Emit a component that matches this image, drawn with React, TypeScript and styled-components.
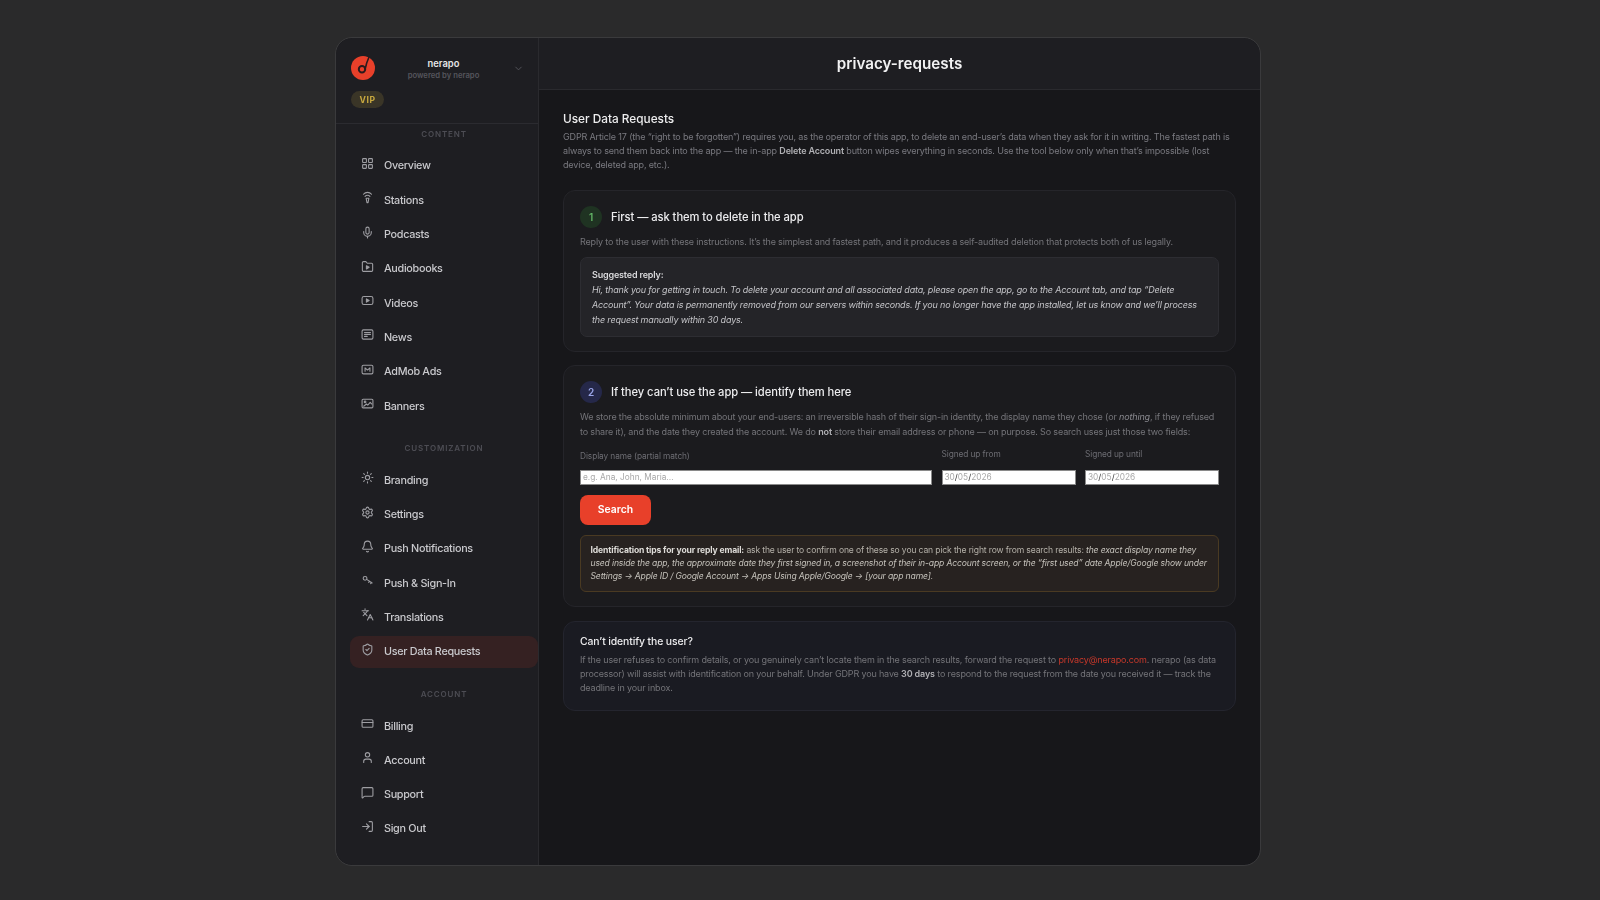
import React from "react";
import styled, { createGlobalStyle } from "styled-components";
import { LayoutGrid, Mic, Sun, Settings, Bell, Languages, ShieldCheck, CreditCard, User, MessageSquare, LogIn, ChevronDown } from "lucide-react";

const Global = createGlobalStyle`
  html, body { margin: 0; padding: 0; background: #2a2a2b; }
  * { box-sizing: border-box; }
  body { font-family: Inter, "Liberation Sans", sans-serif; }
`;

const Page = styled.div`
  width: 1600px;
  height: 900px;
  padding: 38px 0 0 336px;
  background: #2a2a2b;
  overflow: hidden;
`;
const Win = styled.div`
  width: 924px;
  height: 827px;
  display: flex;
  border-radius: 16px;
  outline: 1px solid #3a3a3c;
  overflow: hidden;
  background: #17171a;
  filter: blur(0.3px);
`;
const Side = styled.aside`
  width: 203px;
  flex: none;
  background: #1e1e22;
  border-right: 1px solid #2a2a2e;
  display: flex;
  flex-direction: column;
`;
const Brand = styled.div`
  height: 86px;
  padding: 18px 0 0 15px;
  border-bottom: 1px solid #2b2b30;
`;
const BrandRow = styled.div`
  display: flex;
  align-items: center;
  height: 24px;
`;
const BrandText = styled.div`
  width: 135px;
  margin-left: 1px;
  text-align: center;
  line-height: 1;
  padding-top: 3px;
`;
const BrandName = styled.div`
  font-size: 9.4px;
  font-weight: 600;
  color: #e6e6e8;
  margin-bottom: 3.5px;
`;
const BrandSub = styled.div`
  font-size: 7.7px;
  font-weight: 600;
  color: #55555c;
`;
const Chevron = styled.span`
  display: flex;
  margin-left: 2px;
  color: #55555c;
`;
const Vip = styled.span`
  display: inline-flex;
  align-items: center;
  justify-content: center;
  width: 33px;
  height: 17px;
  margin-top: 11px;
  border-radius: 9px;
  background: #3a3527;
  color: #c9a93f;
  font-size: 8.6px;
  font-weight: 700;
  letter-spacing: 0.5px;
`;
const Nav = styled.nav`
  padding: 4px 0 0 14px;
`;
const Section = styled.div<{ $first?: boolean }>`
  height: 12px;
  line-height: 12px;
  margin: ${(p) => (p.$first ? "-0.5px 0 10.3px" : "19.6px 0 10.4px")};
  text-align: center;
  font-size: 8px;
  font-weight: 600;
  letter-spacing: 0.85px;
  color: #4d4d54;
`;
const List = styled.div`
  display: flex;
  flex-direction: column;
  gap: 2px;
`;
const Item = styled.a<{ $active?: boolean }>`
  display: flex;
  align-items: center;
  gap: 10px;
  height: 32.3px;
  padding-left: 11px;
  border-radius: 9px;
  font-size: 10.8px;
  letter-spacing: -0.3px;
  font-weight: 500;
  color: #c9c9cd;
  background: ${(p) => (p.$active ? "#352122" : "transparent")};
  svg { flex: none; margin-bottom: 5px; color: #9e9ea3; }
`;

const Main = styled.main`
  flex: 1;
  display: flex;
  flex-direction: column;
  min-width: 0;
`;
const Top = styled.header`
  height: 51.5px;
  flex: none;
  display: flex;
  align-items: center;
  justify-content: center;
  background: #1e1e22;
  border-bottom: 1px solid #2a2a2e;
  font-size: 15.2px;
  font-weight: 600;
  color: #f2f2f3;
`;
const Content = styled.div`
  padding: 21px 24px 0;
`;
const H2 = styled.h2`
  margin: 0 0 3.5px;
  font-size: 11.8px;
  line-height: 16px;
  font-weight: 500;
  color: #ededee;
`;
const Intro = styled.p`
  margin: 0 0 17px;
  font-size: 9px;
  letter-spacing: -0.15px;
  line-height: 14.2px;
  color: #7a7a80;
  b { color: #b0b0b4; font-weight: 600; }
`;
const Card = styled.section<{ $tint?: boolean }>`
  padding: ${(p) => (p.$tint ? "12.5px 16px 14.5px" : "15px 16px 14.5px")};
  margin-bottom: 13.3px;
  border-radius: 12px;
  border: 1px solid ${(p) => (p.$tint ? "#24252e" : "#25252a")};
  background: ${(p) => (p.$tint ? "#1a1b22" : "#1b1b1e")};
`;
const StepHead = styled.div`
  display: flex;
  align-items: center;
  gap: 9px;
  height: 22px;
  margin-bottom: 7.2px;
`;
const Badge = styled.span<{ $bg: string; $fg: string }>`
  width: 22px;
  height: 22px;
  border-radius: 50%;
  display: flex;
  align-items: center;
  justify-content: center;
  background: ${(p) => p.$bg};
  color: ${(p) => p.$fg};
  font-size: 10px;
  font-weight: 600;
`;
const StepTitle = styled.h3`
  margin: 0;
  font-size: 11.2px;
  letter-spacing: -0.06px;
  font-weight: 500;
  color: #ececee;
`;
const Para = styled.p`
  margin: 0;
  font-size: 9px;
  letter-spacing: -0.15px;
  line-height: 14.2px;
  color: #747479;
  b { color: #b0b0b4; font-weight: 600; }
  i { color: #8a8a90; }
`;
const Reply = styled.div`
  margin-top: 8px;
  padding: 8.5px 11px 9px;
  background: #242428;
  border: 1px solid #2d2d32;
  border-radius: 7px;
  font-size: 9px;
  letter-spacing: -0.17px;
  line-height: 15px;
  color: #c4c4c8;
  font-style: italic;
  b { font-style: normal; font-weight: 600; color: #d9d9dc; display: block; }
`;
const Fields = styled.div`
  display: flex;
  gap: 9.5px;
  margin-top: 9.5px;
`;
const Field = styled.div<{ $wide?: boolean }>`
  ${(p) => (p.$wide ? "flex: 1;" : "width: 134px; flex: none;")}
  display: flex;
  flex-direction: column;
  justify-content: flex-end;
`;
const FieldLabel = styled.label<{ $up?: boolean }>`
  display: block;
  font-size: 8.3px;
  letter-spacing: -0.08px;
  line-height: 12px;
  color: #6d6d73;
  margin-bottom: ${(p) => (p.$up ? "9.5px" : "7.5px")};
`;
const TextBox = styled.input`
  display: block;
  width: 100%;
  height: 15px;
  padding: 0 2px;
  border: 1px solid #8a8a8a;
  background: #fff;
  font: 8.3px Inter, sans-serif;
  outline: none;
  &::placeholder { color: #a8a8a8; opacity: 1; }
`;
const DateBox = styled.div`
  height: 15px;
  padding: 0 2px;
  border: 1px solid #8a8a8a;
  background: #fff;
  font-size: 8.3px;
  line-height: 13px;
  color: #333;
  span { color: #a8a8a8; }
`;
const SearchBtn = styled.button`
  display: block;
  width: 71px;
  height: 30px;
  margin-top: 10px;
  border: 0;
  border-radius: 8px;
  background: #e8402a;
  color: #fff;
  font: 600 10.4px Inter, sans-serif;
`;
const Tips = styled.div`
  margin-top: 10.5px;
  padding: 7.5px 9.5px 7px;
  background: #272220;
  border: 1px solid #4a3a22;
  border-radius: 6px;
  font-size: 8.6px;
  letter-spacing: -0.15px;
  line-height: 13.3px;
  color: #b4b0a8;
  b { font-weight: 700; color: #dedcd8; }
  i { color: #c4c1ba; }
`;
const AsideTitle = styled.h3`
  margin: 0 0 3px;
  font-size: 10.4px;
  letter-spacing: -0.1px;
  line-height: 16px;
  font-weight: 500;
  color: #ececee;
`;
const MailLink = styled.a`
  color: #c8382a;
`;

type IP = { size?: number };
const Base: React.FC<React.PropsWithChildren<IP>> = ({ size = 13, children }) => (
  <svg width={size} height={size} viewBox="0 0 24 24" fill="none" stroke="currentColor" strokeWidth={2} strokeLinecap="round" strokeLinejoin="round">
    {children}
  </svg>
);
const TowerIcon = () => (
  <Base>
    <path d="M4.5 6a10 10 0 0 1 15 0" />
    <path d="M7.500 10a6 6 0 0 1 9 0" />
    <path d="M9.500 13.500h5l-1.500 8h-2z" />
  </Base>
);
const FolderPlayIcon = () => (
  <Base>
    <path d="M2.5 5a2 2 0 0 1 2-2h4.500l2.500 3H19.500a2 2 0 0 1 2 2v11a2 2 0 0 1-2 2h-15a2 2 0 0 1-2-2z" />
    <path d="M10 10.500l5 3-5 3z" fill="currentColor" />
  </Base>
);
const VideoIcon = () => (
  <Base>
    <rect x="2" y="4.500" width="20" height="15" rx="3.500" />
    <path d="M10 9l5 3-5 3z" fill="currentColor" />
  </Base>
);
const NewsIcon = () => (
  <Base>
    <rect x="2" y="3.500" width="20" height="17" rx="2.500" />
    <path d="M6.500 8.500h11M6.500 12h11M6.500 15.500h5" />
  </Base>
);
const AdIcon = () => (
  <Base>
    <rect x="2" y="4" width="20" height="16" rx="2.500" />
    <path d="M7.500 15V9l4.500 4 4.500-4v6" />
  </Base>
);
const BannerIcon = () => (
  <Base>
    <rect x="2" y="4" width="20" height="16" rx="2" />
    <circle cx="7.500" cy="9" r="1.500" />
    <path d="M5 17l5-4 2.500 2 4.500-5 3 3" />
  </Base>
);
const KeyIcon = () => (
  <Base>
    <circle cx="7.500" cy="8" r="3.500" />
    <path d="M10.500 10l10 6.500M15.500 13.200l-1.200 2.300M19 15.500l-1.200 2.300" />
  </Base>
);
const Logo = () => (
  <svg width="24" height="24" viewBox="0 0 24 24">
    <circle cx="12" cy="12" r="12" fill="#e8402a" />
    <circle cx="11" cy="13.300" r="3.200" fill="#e8402a" stroke="#2a1a1c" strokeWidth="2" />
    <path d="M14.200 12.800C15 9 16 5.500 17.800 1.500" fill="none" stroke="#2a1a1c" strokeWidth="1.600" strokeLinecap="round" />
  </svg>
);

const ICON = 13;
const content: [string, React.ReactNode][] = [
  ["Overview", <LayoutGrid size={ICON} />],
  ["Stations", <TowerIcon />],
  ["Podcasts", <Mic size={ICON} />],
  ["Audiobooks", <FolderPlayIcon />],
  ["Videos", <VideoIcon />],
  ["News", <NewsIcon />],
  ["AdMob Ads", <AdIcon />],
  ["Banners", <BannerIcon />],
];
const custom: [string, React.ReactNode][] = [
  ["Branding", <Sun size={ICON} />],
  ["Settings", <Settings size={ICON} />],
  ["Push Notifications", <Bell size={ICON} />],
  ["Push & Sign-In", <KeyIcon />],
  ["Translations", <Languages size={ICON} />],
  ["User Data Requests", <ShieldCheck size={ICON} />],
];
const account: [string, React.ReactNode][] = [
  ["Billing", <CreditCard size={ICON} />],
  ["Account", <User size={ICON} />],
  ["Support", <MessageSquare size={ICON} />],
  ["Sign Out", <LogIn size={ICON} />],
];

const Group = ({ title, items, first }: { title: string; items: [string, React.ReactNode][]; first?: boolean }) => (
  <>
    <Section $first={first}>{title}</Section>
    <List>
      {items.map(([label, icon]) => (
        <Item key={label} $active={label === "User Data Requests"}>
          {icon}
          {label}
        </Item>
      ))}
    </List>
  </>
);

const DateField = () => (
  <DateBox>
    <span>30</span>/<span>05</span>/<span>2026</span>
  </DateBox>
);

export default function App() {
  return (
    <Page>
      <Global />
      <Win>
        <Side>
          <Brand>
            <BrandRow>
              <Logo />
              <BrandText>
                <BrandName>nerapo</BrandName>
                <BrandSub>powered by nerapo</BrandSub>
              </BrandText>
              <Chevron>
                <ChevronDown size={11} />
              </Chevron>
            </BrandRow>
            <Vip>VIP</Vip>
          </Brand>
          <Nav>
            <Group title="CONTENT" items={content} first />
            <Group title="CUSTOMIZATION" items={custom} />
            <Group title="ACCOUNT" items={account} />
          </Nav>
        </Side>
        <Main>
          <Top>privacy-requests</Top>
          <Content>
            <H2>User Data Requests</H2>
            <Intro>
              GDPR Article 17 (the “right to be forgotten”) requires you, as the operator of this app, to delete an end-user’s data when they ask for it in writing. The fastest path is always to send them back into the app — the in-app <b>Delete Account</b> button wipes everything in seconds. Use the tool below only when that’s impossible (lost device, deleted app, etc.).
            </Intro>
            <Card>
              <StepHead>
                <Badge $bg="#1f3322" $fg="#62b566">1</Badge>
                <StepTitle>First — ask them to delete in the app</StepTitle>
              </StepHead>
              <Para>Reply to the user with these instructions. It’s the simplest and fastest path, and it produces a self-audited deletion that protects both of us legally.</Para>
              <Reply>
                <b>Suggested reply:</b>
                Hi, thank you for getting in touch. To delete your account and all associated data, please open the app, go to the Account tab, and tap “Delete Account”. Your data is permanently removed from our servers within seconds. If you no longer have the app installed, let us know and we’ll process the request manually within 30 days.
              </Reply>
            </Card>
            <Card>
              <StepHead>
                <Badge $bg="#252849" $fg="#9aa5e8">2</Badge>
                <StepTitle>If they can’t use the app — identify them here</StepTitle>
              </StepHead>
              <Para>
                We store the absolute minimum about your end-users: an irreversible hash of their sign-in identity, the display name they chose (or <i>nothing</i>, if they refused to share it), and the date they created the account. We do <b>not</b> store their email address or phone — on purpose. So search uses just those two fields:
              </Para>
              <Fields>
                <Field $wide>
                  <FieldLabel>Display name (partial match)</FieldLabel>
                  <TextBox placeholder="e.g. Ana, John, Maria..." readOnly />
                </Field>
                <Field>
                  <FieldLabel $up>Signed up from</FieldLabel>
                  <DateField />
                </Field>
                <Field>
                  <FieldLabel $up>Signed up until</FieldLabel>
                  <DateField />
                </Field>
              </Fields>
              <SearchBtn>Search</SearchBtn>
              <Tips>
                <b>Identification tips for your reply email:</b> ask the user to confirm one of these so you can pick the right row from search results: <i>the exact display name they used inside the app, the approximate date they first signed in, a screenshot of their in-app Account screen, or the “first used” date Apple/Google show under Settings → Apple ID / Google Account → Apps Using Apple/Google → [your app name].</i>
              </Tips>
            </Card>
            <Card $tint>
              <AsideTitle>Can’t identify the user?</AsideTitle>
              <Para>
                If the user refuses to confirm details, or you genuinely can’t locate them in the search results, forward the request to <MailLink>privacy@nerapo.com</MailLink>. nerapo (as data processor) will assist with identification on your behalf. Under GDPR you have <b>30 days</b> to respond to the request from the date you received it — track the deadline in your inbox.
              </Para>
            </Card>
          </Content>
        </Main>
      </Win>
    </Page>
  );
}
